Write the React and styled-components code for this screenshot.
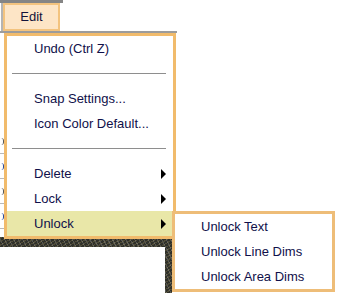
import React from 'react';
import styled, { createGlobalStyle } from 'styled-components';

const GlobalStyle = createGlobalStyle`
    html, body {
        margin: 0;
        padding: 0;
        background: #ffffff;
    }
    body {
        font-family: "Liberation Sans", Arial, sans-serif;
        font-size: 13px;
    }
`;

const Screen = styled.div`
    position: relative;
    width: 337px;
    height: 293px;
    overflow: hidden;
    background: #ffffff;
    display: flex;
    flex-direction: column;
`;

const MenuBar = styled.div`
    height: 31px;
    display: flex;
    align-items: flex-start;
`;

const TabFrame = styled.div`
    width: 63px;
    height: 31px;
    box-sizing: border-box;
    border-top: 3px solid #858585;
    padding-left: 3px;
    display: flex;
`;

const EditButton = styled.div`
    width: 57px;
    height: 28px;
    box-sizing: border-box;
    border: 2px solid #f3c37e;
    box-shadow: -2px 0 0 #b4b4b4;
    background: #fde5c6;
    color: #12123a;
    display: flex;
    align-items: center;
    justify-content: center;
    padding-bottom: 1px;
`;

const ToolbarRule = styled.div`
    width: 177px;
    height: 2px;
    background: #9c9c9c;
`;

const Workspace = styled.div`
    flex: 1;
    display: flex;
    flex-direction: column;
`;

const SideColumn = styled.div`
    height: 204px;
    width: 5px;
    padding-top: 96px;
    box-sizing: border-box;
    display: flex;
    flex-direction: column;
`;

const SideCell = styled.div`
    height: 24px;
    border-bottom: 1px solid #b9b9b9;
    display: flex;
    align-items: center;
    &::before {
        content: "";
        width: 3px;
        height: 7px;
        border-right: 1px solid ${({ $mark }) => $mark};
        border-radius: 0 3px 3px 0;
    }
`;

const PhotoFrame = styled.div`
    flex: 1;
    width: 172px;
    box-sizing: border-box;
    padding: 10px 7px 0 0;
    background:
        repeating-linear-gradient(63deg, rgba(255,255,255,0.18) 0 1px, transparent 1px 4px),
        repeating-linear-gradient(-31deg, rgba(120,110,70,0.45) 0 1px, transparent 1px 3px),
        #2f302a;
    display: flex;
`;

const PhotoInner = styled.div`
    flex: 1;
    background: #ffffff;
`;

const Menu = styled.div`
    position: absolute;
    left: 4px;
    top: 33px;
    width: 172px;
    box-sizing: border-box;
    border: 3px solid #f1bb6c;
    background: #ffffff;
    display: flex;
    flex-direction: column;
`;

const Item = styled.div`
    position: relative;
    height: 25px;
    display: flex;
    align-items: center;
    padding-left: ${({ $indent }) => $indent}px;
    padding-right: 7px;
    color: #10104a;
    background: ${({ $active }) => ($active ? '#e9e7a8' : 'transparent')};
    white-space: nowrap;
`;

const Label = styled.span`
    flex: 1;
`;

const Arrow = styled.span`
    width: 0;
    height: 0;
    border-top: 5px solid transparent;
    border-bottom: 5px solid transparent;
    border-left: 5px solid #000000;
`;

const Separator = styled.div`
    height: 25px;
    display: flex;
    align-items: center;
    padding: 0 7px 0 5px;
    &::after {
        content: "";
        flex: 1;
        height: 1px;
        background: #8e8e8e;
    }
`;

const SubMenu = styled.div`
    position: absolute;
    top: 0;
    left: calc(100% - 1px);
    width: 163px;
    box-sizing: border-box;
    border: 3px solid #eebd78;
    background: #ffffff;
    display: flex;
    flex-direction: column;
`;

const sideMarks = ['#555555', '#2b4a9a', '#555555', '#2b4a9a'];

const App = () => {
    return (
        <Screen>
            <GlobalStyle />
            <MenuBar>
                <TabFrame>
                    <EditButton>Edit</EditButton>
                </TabFrame>
            </MenuBar>
            <ToolbarRule />
            <Workspace>
                <SideColumn>
                    {sideMarks.map((c, i) => (
                        <SideCell key={i} $mark={c} />
                    ))}
                </SideColumn>
                <PhotoFrame>
                    <PhotoInner />
                </PhotoFrame>
            </Workspace>

            <Menu>
                <Item $indent={27}><Label>Undo (Ctrl Z)</Label></Item>
                <Separator />
                <Item $indent={27}><Label>Snap Settings...</Label></Item>
                <Item $indent={27}><Label>Icon Color Default...</Label></Item>
                <Separator />
                <Item $indent={27}><Label>Delete</Label><Arrow /></Item>
                <Item $indent={27}><Label>Lock</Label><Arrow /></Item>
                <Item $indent={27} $active>
                    <Label>Unlock</Label>
                    <Arrow />
                    <SubMenu>
                        <Item $indent={26}><Label>Unlock Text</Label></Item>
                        <Item $indent={26}><Label>Unlock Line Dims</Label></Item>
                        <Item $indent={26}><Label>Unlock Area Dims</Label></Item>
                    </SubMenu>
                </Item>
            </Menu>
        </Screen>
    );
};

export default App;
